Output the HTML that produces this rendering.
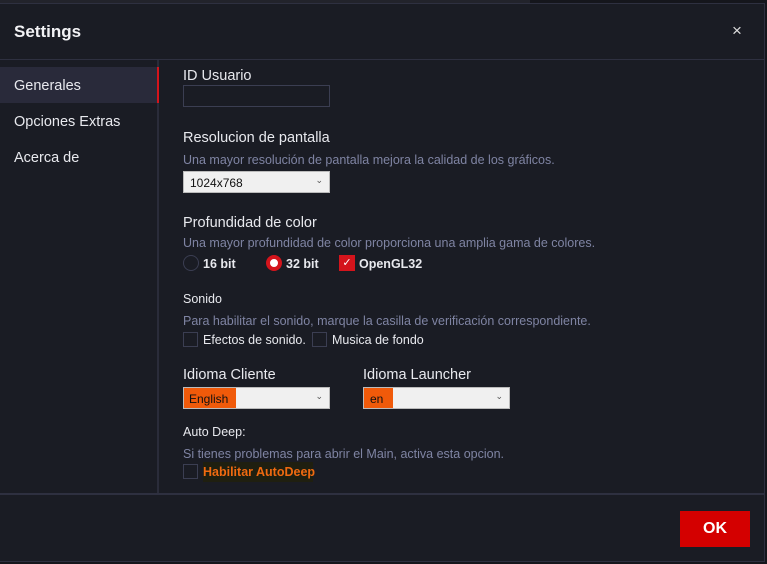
<!DOCTYPE html>
<html><head><meta charset="utf-8"><style>
*{margin:0;padding:0;box-sizing:border-box}
body{width:767px;height:564px;background:#15161c;font-family:"Liberation Sans",sans-serif;position:relative;overflow:hidden;color:#e6e7ec}
.a{position:absolute;white-space:nowrap}
#dlg{position:absolute;left:0;top:3px;width:765px;height:559px;background:#1a1c24;border:1px solid #2e3040;border-left:none}
.lbl{font-size:14.5px;color:#e8e9ee}
.sm{font-size:12.5px;color:#e8e9ee}
.desc{font-size:12.5px;color:#7f84a3}
.box{position:absolute;width:15px;height:15px;border:1px solid #3b3e52}
.sel{position:absolute;height:22px;background:#f0f0f0;border:1px solid #bbb;font-size:12px;color:#111}
.chev{position:absolute;right:6px;top:3px;font-size:9px;color:#555}
</style></head><body>
<div class="a" style="left:0;top:0;width:530px;height:3px;background:#22232b"></div>
<div id="dlg"></div>
<div class="a" style="left:14px;top:22px;font-size:17px;font-weight:bold;color:#f2f2f5">Settings</div>
<div class="a" style="left:732px;top:21px;font-size:17px;color:#ddd">×</div>
<div class="a" style="left:0;top:59px;width:765px;height:1px;background:#2e3040"></div>
<div class="a" style="left:157px;top:60px;width:2px;height:434px;background:#2a2c3a"></div>
<div class="a" style="left:0;top:67px;width:157px;height:36px;background:#292a3a"></div>
<div class="a" style="left:157px;top:67px;width:2px;height:36px;background:#d4141c"></div>
<div class="a lbl" style="left:14px;top:78px">Generales</div>
<div class="a lbl" style="left:14px;top:114px">Opciones Extras</div>
<div class="a lbl" style="left:14px;top:150px">Acerca de</div>

<div class="a lbl" style="left:183px;top:68px">ID Usuario</div>
<div class="a" style="left:183px;top:85px;width:147px;height:22px;border:1px solid #3b3e52"></div>
<div class="a lbl" style="left:183px;top:130px">Resolucion de pantalla</div>
<div class="a desc" style="left:183px;top:153px">Una mayor resolución de pantalla mejora la calidad de los gráficos.</div>
<div class="sel" style="left:183px;top:171px;width:147px"><span class="a" style="left:6px;top:4px">1024x768</span><span class="chev">⌄</span></div>

<div class="a lbl" style="left:183px;top:215px">Profundidad de color</div>
<div class="a desc" style="left:183px;top:236px">Una mayor profundidad de color proporciona una amplia gama de colores.</div>
<div class="a" style="left:183px;top:255px;width:16px;height:16px;border-radius:50%;border:1px solid #3b3e52"></div>
<div class="a sm" style="left:203px;top:257px;font-weight:bold">16 bit</div>
<div class="a" style="left:266px;top:255px;width:16px;height:16px;border-radius:50%;border:4px solid #d4141c;background:#fff"></div>
<div class="a sm" style="left:286px;top:257px;font-weight:bold">32 bit</div>
<div class="a" style="left:339px;top:255px;width:16px;height:16px;background:#d4141c;color:#fff;font-size:11px;text-align:center;line-height:16px">✓</div>
<div class="a sm" style="left:359px;top:257px;font-weight:bold">OpenGL32</div>

<div class="a sm" style="left:183px;top:292px">Sonido</div>
<div class="a desc" style="left:183px;top:314px">Para habilitar el sonido, marque la casilla de verificación correspondiente.</div>
<div class="box" style="left:183px;top:332px"></div>
<div class="a sm" style="left:203px;top:333px">Efectos de sonido.</div>
<div class="box" style="left:312px;top:332px"></div>
<div class="a sm" style="left:332px;top:333px">Musica de fondo</div>

<div class="a lbl" style="left:183px;top:367px">Idioma Cliente</div>
<div class="sel" style="left:183px;top:387px;width:147px"><span class="a" style="left:0;top:0;width:52px;height:20px;background:#f05a0a"></span><span class="a" style="left:5px;top:4px">English</span><span class="chev">⌄</span></div>
<div class="a lbl" style="left:363px;top:367px">Idioma Launcher</div>
<div class="sel" style="left:363px;top:387px;width:147px"><span class="a" style="left:0;top:0;width:29px;height:20px;background:#f05a0a"></span><span class="a" style="left:6px;top:4px">en</span><span class="chev">⌄</span></div>

<div class="a sm" style="left:183px;top:425px">Auto Deep:</div>
<div class="a desc" style="left:183px;top:447px">Si tienes problemas para abrir el Main, activa esta opcion.</div>
<div class="box" style="left:183px;top:464px"></div>
<div class="a" style="left:203px;top:462px;width:110px;height:20px;background:#1f1f10"></div>
<div class="a sm" style="left:203px;top:465px;color:#f06a10;font-weight:bold">Habilitar AutoDeep</div>

<div class="a" style="left:0;top:493px;width:765px;height:2px;background:#2e3040"></div>
<div class="a" style="left:680px;top:511px;width:70px;height:36px;background:#d40000;color:#fff;font-size:16px;font-weight:bold;text-align:center;line-height:36px">OK</div>
</body></html>
